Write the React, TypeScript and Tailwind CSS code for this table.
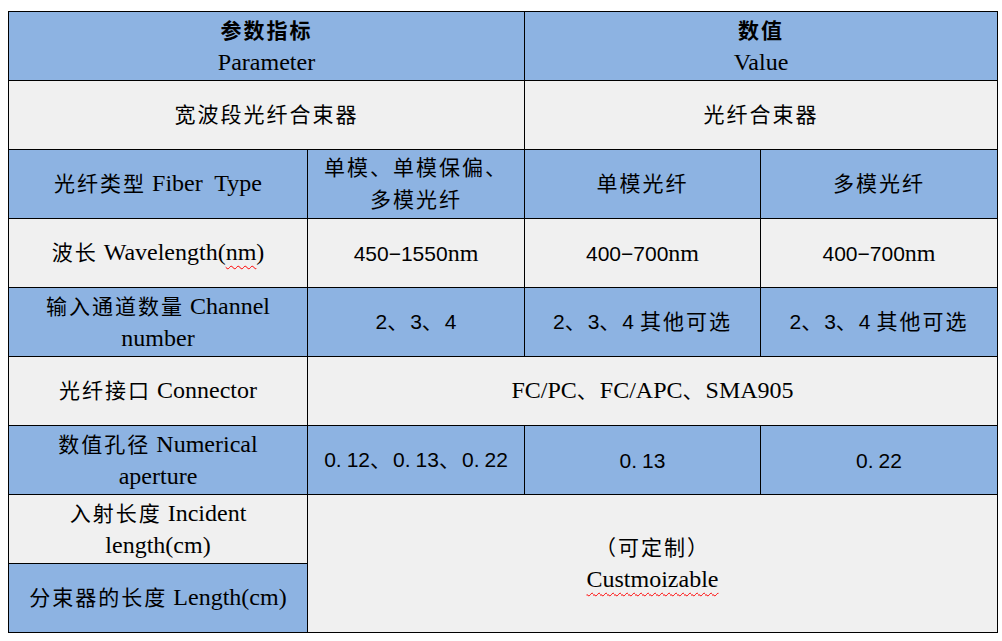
const blue = "bg-[#8db3e2]"
const light = "bg-[#f0f0f0]"
const cell = "border border-black text-center align-middle px-1 leading-[31px] whitespace-nowrap"

// CJK runs: a bit smaller with tracking, to mimic SimSun's airy glyphs
function Zh({ children, bold = false }: { children: React.ReactNode; bold?: boolean }) {
  return (
    <span className={`text-[21px] tracking-[2px] ${bold ? "font-bold" : "font-normal"}`}>{children}</span>
  )
}

// digits were set in a sans face in the original
function Num({ children }: { children: React.ReactNode }) {
  return <span className="font-['Liberation_Sans',sans-serif] text-[21px]">{children}</span>
}

function Dec({ v }: { v: string }) {
  const [a, b] = v.split(".")
  return (
    <Num>
      {a}.<span className="ml-[5px]">{b}</span>
    </Num>
  )
}

export default function App() {
  return (
    <div className="min-h-screen bg-white pt-[11px] pl-[8px] font-['Liberation_Serif','Noto_Sans_CJK_SC',serif] text-[24px] text-black">
      <table className="table-fixed border-collapse w-[989px]">
        <colgroup>
          <col className="w-[299px]" />
          <col className="w-[217px]" />
          <col className="w-[236px]" />
          <col className="w-[237px]" />
        </colgroup>
        <tbody>
          {/* header */}
          <tr className={`h-[69px] ${blue}`}>
            <td colSpan={2} className={cell}>
              <Zh bold>参数指标</Zh>
              <br />
              Parameter
            </td>
            <td colSpan={2} className={cell}>
              <Zh bold>数值</Zh>
              <br />
              Value
            </td>
          </tr>

          <tr className={`h-[69px] ${light}`}>
            <td colSpan={2} className={cell}>
              <Zh>宽波段光纤合束器</Zh>
            </td>
            <td colSpan={2} className={cell}>
              <Zh>光纤合束器</Zh>
            </td>
          </tr>

          <tr className={`h-[69px] ${blue}`}>
            <td className={cell}>
              <Zh>光纤类型</Zh> Fiber&nbsp; Type
            </td>
            <td className={cell}>
              <Zh>单模、单模保偏、</Zh>
              <br />
              <Zh>多模光纤</Zh>
            </td>
            <td className={cell}>
              <Zh>单模光纤</Zh>
            </td>
            <td className={cell}>
              <Zh>多模光纤</Zh>
            </td>
          </tr>

          <tr className={`h-[69px] ${light}`}>
            <td className={cell}>
              <Zh>波长</Zh> Wavelength(
              <span className="underline decoration-wavy decoration-[#ff0000] decoration-1 underline-offset-[5px]">nm</span>)
            </td>
            <td className={cell}>
              <Num>450−1550</Num>nm
            </td>
            <td className={cell}>
              <Num>400−700</Num>nm
            </td>
            <td className={cell}>
              <Num>400−700</Num>nm
            </td>
          </tr>

          <tr className={`h-[69px] ${blue}`}>
            <td className={cell}>
              <Zh>输入通道数量</Zh> Channel
              <br />
              number
            </td>
            <td className={cell}>
              <Num>2</Num>
              <Zh>、</Zh>
              <Num>3</Num>
              <Zh>、</Zh>
              <Num>4</Num>
            </td>
            <td className={cell}>
              <Num>2</Num>
              <Zh>、</Zh>
              <Num>3</Num>
              <Zh>、</Zh>
              <Num>4</Num> <Zh>其他可选</Zh>
            </td>
            <td className={cell}>
              <Num>2</Num>
              <Zh>、</Zh>
              <Num>3</Num>
              <Zh>、</Zh>
              <Num>4</Num> <Zh>其他可选</Zh>
            </td>
          </tr>

          <tr className={`h-[69px] ${light}`}>
            <td className={cell}>
              <Zh>光纤接口</Zh> Connector
            </td>
            <td colSpan={3} className={cell}>
              FC/PC<Zh>、</Zh>FC/APC<Zh>、</Zh>SMA905
            </td>
          </tr>

          <tr className={`h-[69px] ${blue}`}>
            <td className={cell}>
              <Zh>数值孔径</Zh> Numerical
              <br />
              aperture
            </td>
            <td className={cell}>
              <Dec v="0.12" />
              <Zh>、</Zh>
              <Dec v="0.13" />
              <Zh>、</Zh>
              <Dec v="0.22" />
            </td>
            <td className={cell}>
              <Dec v="0.13" />
            </td>
            <td className={cell}>
              <Dec v="0.22" />
            </td>
          </tr>

          <tr className={`h-[69px] ${light}`}>
            <td className={cell}>
              <Zh>入射长度</Zh> Incident
              <br />
              length(cm)
            </td>
            <td colSpan={3} rowSpan={2} className={cell}>
              <Zh>（可定制）</Zh>
              <br />
              <span className="underline decoration-wavy decoration-[#ff0000] decoration-1 underline-offset-[5px]">
                Custmoizable
              </span>
            </td>
          </tr>

          <tr className={`h-[69px] ${blue}`}>
            <td className={cell}>
              <Zh>分束器的长度</Zh> Length(cm)
            </td>
          </tr>
        </tbody>
      </table>
    </div>
  )
}
